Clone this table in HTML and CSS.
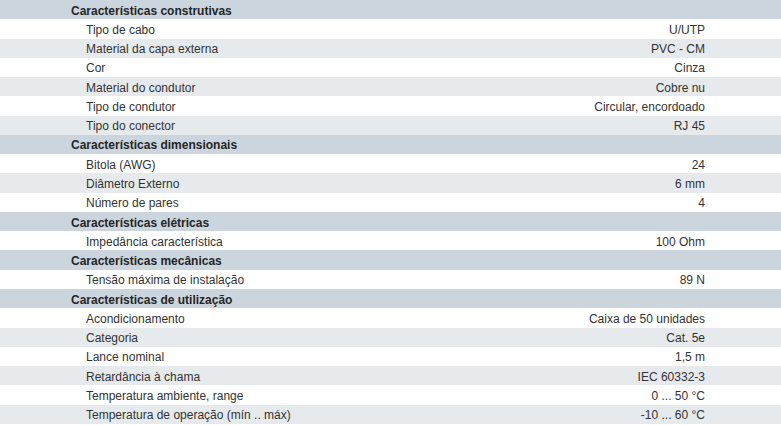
FILE: index.html
```html
<!DOCTYPE html>
<html lang="pt">
<head>
<meta charset="utf-8">
<link rel="stylesheet" href="styles.css">
</head>
<body>
<table class="spec">
  <tbody>
    <tr class="group"><th colspan="2">Características construtivas</th></tr>
    <tr class="odd"><td class="label">Tipo de cabo</td><td class="value">U/UTP</td></tr>
    <tr class="even"><td class="label">Material da capa externa</td><td class="value">PVC - CM</td></tr>
    <tr class="odd"><td class="label">Cor</td><td class="value">Cinza</td></tr>
    <tr class="even"><td class="label">Material do condutor</td><td class="value">Cobre nu</td></tr>
    <tr class="odd"><td class="label">Tipo de condutor</td><td class="value">Circular, encordoado</td></tr>
    <tr class="even"><td class="label">Tipo do conector</td><td class="value">RJ 45</td></tr>
    <tr class="group"><th colspan="2">Características dimensionais</th></tr>
    <tr class="odd"><td class="label">Bitola (AWG)</td><td class="value">24</td></tr>
    <tr class="even"><td class="label">Diâmetro Externo</td><td class="value">6 mm</td></tr>
    <tr class="odd"><td class="label">Número de pares</td><td class="value">4</td></tr>
    <tr class="group"><th colspan="2">Características elétricas</th></tr>
    <tr class="odd"><td class="label">Impedância característica</td><td class="value">100 Ohm</td></tr>
    <tr class="group"><th colspan="2">Características mecânicas</th></tr>
    <tr class="odd"><td class="label">Tensão máxima de instalação</td><td class="value">89 N</td></tr>
    <tr class="group"><th colspan="2">Características de utilização</th></tr>
    <tr class="odd"><td class="label">Acondicionamento</td><td class="value">Caixa de 50 unidades</td></tr>
    <tr class="even"><td class="label">Categoria</td><td class="value">Cat. 5e</td></tr>
    <tr class="odd"><td class="label">Lance nominal</td><td class="value">1,5 m</td></tr>
    <tr class="even"><td class="label">Retardância à chama</td><td class="value">IEC 60332-3</td></tr>
    <tr class="odd"><td class="label">Temperatura ambiente, range</td><td class="value">0 ... 50 °C</td></tr>
    <tr class="even"><td class="label">Temperatura de operação (mín .. máx)</td><td class="value">-10 ... 60 °C</td></tr>
  </tbody>
</table>
</body>
</html>
```

FILE: styles.css
```css
html, body {
  margin: 0;
  padding: 0;
  background: #ffffff;
}

.spec {
  width: 781px;
  border-collapse: collapse;
  border-spacing: 0;
  font-family: "Liberation Sans", Arial, sans-serif;
  font-size: 12px;
  color: #333333;
}

.spec tr {
  height: 19.28px;
}

.spec th,
.spec td {
  padding: 2px 0 0 0;
  line-height: 14px;
  vertical-align: middle;
  white-space: nowrap;
}

.spec .group th {
  background: #cbd5dd;
  text-align: left;
  font-weight: bold;
  color: #262626;
  padding-left: 71px;
}

.spec .odd td {
  background: #ffffff;
}

.spec .even td {
  background: #e7eaed;
}

.spec .label {
  padding-left: 86px;
  text-align: left;
}

.spec .value {
  text-align: right;
  padding-right: 76px;
}
```
